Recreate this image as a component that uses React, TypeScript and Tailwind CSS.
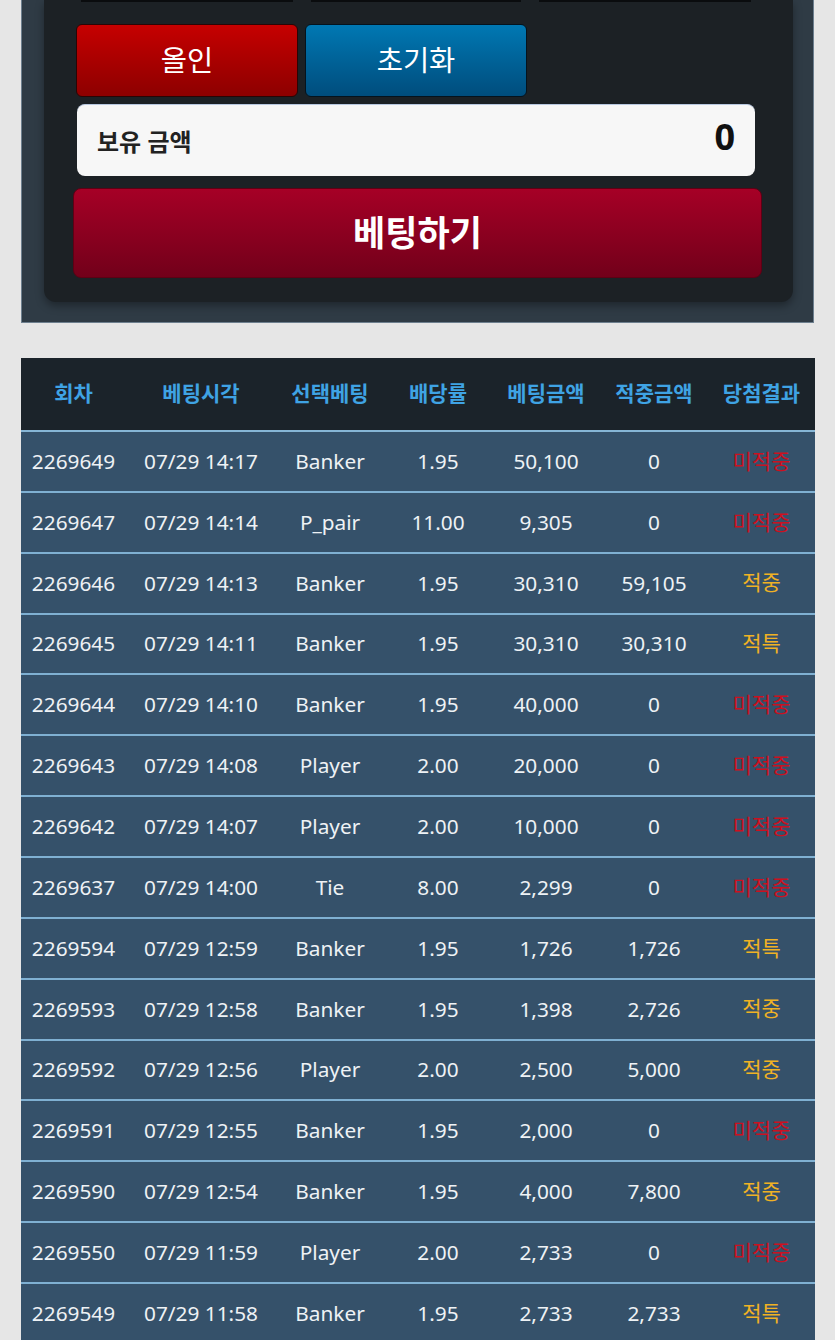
import React from "react";

type Row = {
    round: string;
    time: string;
    pick: string;
    odds: string;
    bet: string;
    win: string;
    result: "미적중" | "적중" | "적특";
};

const rows: Row[] = [
    { round: "2269649", time: "07/29 14:17", pick: "Banker", odds: "1.95", bet: "50,100", win: "0", result: "미적중" },
    { round: "2269647", time: "07/29 14:14", pick: "P_pair", odds: "11.00", bet: "9,305", win: "0", result: "미적중" },
    { round: "2269646", time: "07/29 14:13", pick: "Banker", odds: "1.95", bet: "30,310", win: "59,105", result: "적중" },
    { round: "2269645", time: "07/29 14:11", pick: "Banker", odds: "1.95", bet: "30,310", win: "30,310", result: "적특" },
    { round: "2269644", time: "07/29 14:10", pick: "Banker", odds: "1.95", bet: "40,000", win: "0", result: "미적중" },
    { round: "2269643", time: "07/29 14:08", pick: "Player", odds: "2.00", bet: "20,000", win: "0", result: "미적중" },
    { round: "2269642", time: "07/29 14:07", pick: "Player", odds: "2.00", bet: "10,000", win: "0", result: "미적중" },
    { round: "2269637", time: "07/29 14:00", pick: "Tie", odds: "8.00", bet: "2,299", win: "0", result: "미적중" },
    { round: "2269594", time: "07/29 12:59", pick: "Banker", odds: "1.95", bet: "1,726", win: "1,726", result: "적특" },
    { round: "2269593", time: "07/29 12:58", pick: "Banker", odds: "1.95", bet: "1,398", win: "2,726", result: "적중" },
    { round: "2269592", time: "07/29 12:56", pick: "Player", odds: "2.00", bet: "2,500", win: "5,000", result: "적중" },
    { round: "2269591", time: "07/29 12:55", pick: "Banker", odds: "1.95", bet: "2,000", win: "0", result: "미적중" },
    { round: "2269590", time: "07/29 12:54", pick: "Banker", odds: "1.95", bet: "4,000", win: "7,800", result: "적중" },
    { round: "2269550", time: "07/29 11:59", pick: "Player", odds: "2.00", bet: "2,733", win: "0", result: "미적중" },
    { round: "2269549", time: "07/29 11:58", pick: "Banker", odds: "1.95", bet: "2,733", win: "2,733", result: "적특" },
];

const headers = ["회차", "베팅시각", "선택베팅", "배당률", "베팅금액", "적중금액", "당첨결과"];
const widths = ["w-[105px]", "w-[150px]", "w-[108px]", "w-[108px]", "w-[108px]", "w-[108px]", "w-[107px]"];

const BetPanel = () => {
    return (
        <div className="mx-[21px] bg-[#2f3b45] border-x border-b border-[#6d7f8e] pl-[22px] pr-[20px] pb-[20px]">
            <div className="bg-[#1c2125] rounded-b-[12px] shadow-[0_4px_8px_rgba(0,0,0,0.35)] pl-[33px] pr-[38px] pb-[24px]">
                <div className="flex gap-[18px] pl-[4px]">
                    <div className="w-[212px] h-[2px] bg-[#0a0c0e]" />
                    <div className="w-[210px] h-[2px] bg-[#0a0c0e]" />
                    <div className="w-[212px] h-[2px] bg-[#0a0c0e]" />
                </div>
                <div className="flex gap-[7px] mt-[22px] -ml-[1px]">
                    <button className="w-[222px] h-[73px] rounded-[6px] border border-[#2a0505] bg-gradient-to-b from-[#c60000] to-[#8d0000] text-white text-[28.5px]">
                        올인
                    </button>
                    <button className="w-[222px] h-[73px] rounded-[6px] border border-[#04131e] bg-gradient-to-b from-[#0078b3] to-[#004d7d] text-white text-[28.5px]">
                        초기화
                    </button>
                </div>
                <div className="mt-[7px] h-[72px] rounded-[8px] bg-[#f7f7f7] border-t border-[#b8c8e0] flex items-center justify-between pl-[20px] pr-[20px]">
                    <span className="text-[24px] font-bold text-[#222] mt-[2px]">보유 금액</span>
                    <span className="text-[36px] font-bold text-[#111] -mt-[8px]">0</span>
                </div>
                <button className="mt-[12px] -ml-[4px] w-[689px] h-[90px] rounded-[8px] border border-[#5e0014] bg-gradient-to-b from-[#a60026] to-[#72001a] text-white text-[35px] font-bold">
                    베팅하기
                </button>
            </div>
        </div>
    );
};

const resultColor = (r: Row["result"]) => (r === "미적중" ? "text-[#cc1020]" : "text-[#f0b224]");

const HistoryTable = () => {
    return (
        <div className="mx-[21px] mt-[35px]">
            <table className="w-full table-fixed border-collapse">
                <thead>
                    <tr className="bg-[#1b232a]">
                        {headers.map((h, i) => (
                            <th
                                key={h}
                                className={`${widths[i]} h-[73px] border-b-2 border-[#86b6d6] text-[21px] font-bold text-[#3fa3e4] text-center`}
                            >
                                {h}
                            </th>
                        ))}
                    </tr>
                </thead>
                <tbody>
                    {rows.map((row) => (
                        <tr key={row.round} className="bg-[#35516a] text-[#eef2f5] text-[20.8px]">
                            <td className="h-[60.86px] border-b-2 border-[#7fb0d2] text-center">{row.round}</td>
                            <td className="h-[60.86px] border-b-2 border-[#7fb0d2] text-center">{row.time}</td>
                            <td className="h-[60.86px] border-b-2 border-[#7fb0d2] text-center">{row.pick}</td>
                            <td className="h-[60.86px] border-b-2 border-[#7fb0d2] text-center">{row.odds}</td>
                            <td className="h-[60.86px] border-b-2 border-[#7fb0d2] text-center">{row.bet}</td>
                            <td className="h-[60.86px] border-b-2 border-[#7fb0d2] text-center">{row.win}</td>
                            <td className={`h-[60.86px] border-b-2 border-[#7fb0d2] text-center text-[21px] ${resultColor(row.result)}`}>
                                {row.result}
                            </td>
                        </tr>
                    ))}
                </tbody>
            </table>
        </div>
    );
};

export default function App() {
    return (
        <div
            className="min-h-screen bg-[#e6e6e6] overflow-hidden"
            style={{ fontFamily: '"Noto Sans", "Noto Sans CJK KR", sans-serif' }}
        >
            <BetPanel />
            <HistoryTable />
        </div>
    );
}
